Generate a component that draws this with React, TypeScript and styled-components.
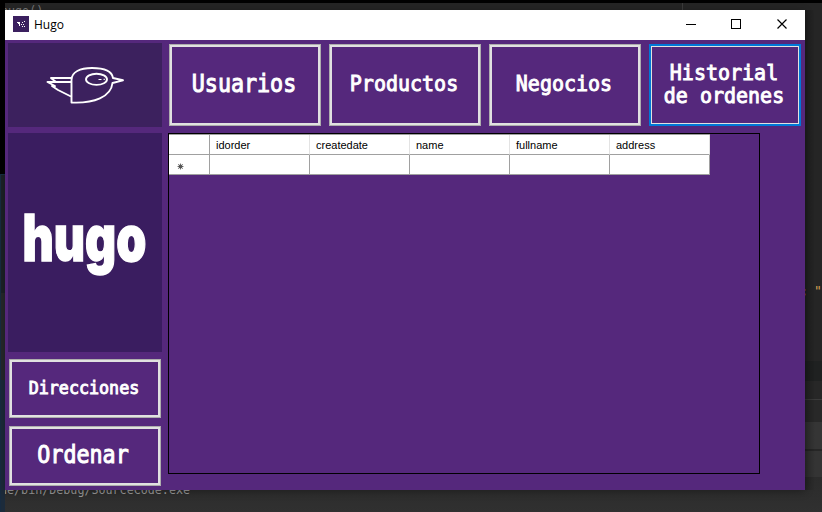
import React from "react";
import styled, { createGlobalStyle } from "styled-components";

const GlobalStyle = createGlobalStyle`
  * { box-sizing: border-box; }
  body { margin: 0; overflow: hidden; background: #262626; }
`;

const Desktop = styled.div`
  position: relative;
  width: 822px;
  height: 512px;
  overflow: hidden;
  padding: 10px 17px 22px 5px;
  background: linear-gradient(#000 0 3px, #252525 3px 340px, #262626 440px, #303030 512px);
`;

const LeftEdge = styled.div`
  position: absolute;
  left: 0;
  top: 0;
  width: 5px;
  height: 512px;
  background:
    linear-gradient(90deg, #182b40 1px, transparent 1px) 0 174px no-repeat,
    linear-gradient(#000 0 174px, #173044 174px 175px, #1c2228 175px 293px, #26292c 293px 380px, #1c2b3b 380px);
`;

const RightEdge = styled.div`
  position: absolute;
  left: 805px;
  top: 3px;
  width: 17px;
  height: 509px;
  background: linear-gradient(
    #252525 0 358px, #1f2121 358px 378px, #272727 378px 396px, #3b3b3b 396px 397px,
    #282828 397px 419px, #353535 419px 446px, #262626 446px 448px, #343434 448px 474px, #2b2b2b 474px, #303030 509px
  );
`;

const EdgeShade = styled.div`
  position: absolute;
  left: 805px;
  top: 10px;
  width: 10px;
  height: 480px;
  background: linear-gradient(90deg, rgba(0, 0, 0, 0.22), transparent);
`;

const Divider = styled.div`
  position: absolute;
  left: 682px;
  top: 3px;
  width: 1px;
  height: 7px;
  background: #3b3b3b;
`;

const CodeText = styled.span<{ $x: number; $y: number; $color: string; $size?: number }>`
  position: absolute;
  left: ${(p) => p.$x}px;
  top: ${(p) => p.$y}px;
  color: ${(p) => p.$color};
  font: ${(p) => p.$size ?? 11.7}px/14px "DejaVu Sans Mono", monospace;
  white-space: pre;
`;

const Window = styled.div`
  position: relative;
  width: 800px;
  height: 480px;
  display: flex;
  flex-direction: column;
  background: #55287c;
  box-shadow: 0 2px 8px rgba(0, 0, 0, 0.3);
`;

const TitleBar = styled.header`
  height: 30px;
  flex: none;
  display: flex;
  align-items: center;
  padding-left: 8px;
  background: #fff;
`;

const IconBox = styled.svg`
  width: 16px;
  height: 16px;
  margin-top: -2px;
`;

const Title = styled.span`
  flex: 1;
  margin: 0 0 0 5px;
  color: #000;
  font: 12px/16px "Open Sans", sans-serif;
`;

const Controls = styled.svg`
  width: 138px;
  height: 30px;
`;

const Body = styled.main`
  flex: 1;
  display: flex;
  padding: 3px 4px 4px 3px;
`;

const Sidebar = styled.aside`
  width: 154px;
  display: flex;
  flex-direction: column;
`;

const BirdPanel = styled.div`
  height: 84px;
  margin-bottom: 6px;
  background: #3c215e;
`;

const LogoPanel = styled.div`
  height: 219px;
  margin-bottom: 7px;
  background: #3a1d60;
`;

const Content = styled.section`
  flex: 1;
  padding: 1px 0 0 6px;
`;

const Nav = styled.nav`
  display: flex;
  gap: 8px;
  padding-left: 1px;
`;

const Button = styled.button<{ $h: number; $focused?: boolean; $gap?: number }>`
  width: 152px;
  height: ${(p) => p.$h}px;
  flex: none;
  display: flex;
  align-items: center;
  justify-content: center;
  margin: 0 0 ${(p) => p.$gap ?? 0}px;
  padding: 0;
  color: #fff;
  background: #55287c;
  border: ${(p) => (p.$focused ? "2px solid #0078d7" : "1px solid #adadad")};
  box-shadow: inset 0 0 0 ${(p) => (p.$focused ? 1 : 2)}px #e1e1e1;
`;

const SideButtons = styled.div`
  display: flex;
  flex-direction: column;
  padding-left: 1px;
`;

const Label = styled.span<{ $size: number; $stretch: number; $x?: number; $y?: number }>`
  font: ${(p) => p.$size}px/21.5px "DejaVu Sans Mono", monospace;
  -webkit-text-stroke: 0.9px #fff;
  white-space: pre;
  text-align: center;
  transform: translate(${(p) => p.$x ?? 0}px, ${(p) => p.$y ?? 0}px) scaleY(${(p) => p.$stretch});
`;

const GridFrame = styled.div`
  width: 592px;
  height: 341px;
  margin-top: 7px;
  border: 1px solid #000;
`;

const Table = styled.div`
  width: 541px;
  height: 41px;
  display: grid;
  grid-template-columns: 41px repeat(5, 100px);
  grid-template-rows: 20px 20px;
  background: #fff;
  border-top: 1px solid #a0a0a0;
`;

const HeaderCell = styled.div<{ $corner?: boolean }>`
  padding: 0 0 0 6px;
  color: #000;
  font: 11px/20px "Liberation Sans", Arial, sans-serif;
  border-bottom: 1px solid #a0a0a0;
  border-right: 1px solid ${(p) => (p.$corner ? "#a0a0a0" : "#e3e3e3")};
`;

const Cell = styled.div`
  display: flex;
  align-items: center;
  padding: 3px 0 0 8px;
  border-right: 1px solid #a0a0a0;
  border-bottom: 1px solid #a0a0a0;
`;

const columns = ["idorder", "createdate", "name", "fullname", "address"];

const AppIcon = () => (
  <IconBox viewBox="0 0 16 16" shapeRendering="crispEdges">
    <rect width="16" height="16" fill="#3b205f" />
    <path d="M4 6h3v4H6V8H5V7H4zM9 6h1v1H9zM11 5h1v1h-1zM8 8h1v1H8zM10 8h1v1h-1zM9 10h1v1H9zM11 10h1v1h-1z" fill="#fff" />
  </IconBox>
);

const Bird = () => (
  <svg width="154" height="84" viewBox="8 43 154 84" fill="none" stroke="#fff" strokeWidth="1.9" strokeLinejoin="round">
    <path d="M71.500 102.500V80C71.500 72 80 68 92 68C104 68 112 71.500 113 78L123 80.300L112.500 83C111 97 94 103.500 71.500 102.500Z" />
    <path d="M71 78H51L56 82H47.500L55 86H52L58 90L71 96.500M56 82H71" />
    <ellipse cx="96.500" cy="79.300" rx="10.500" ry="5.600" />
    <path d="M98.500 79.500h3M103.500 79.300h1.500" strokeWidth="1" />
  </svg>
);

const HugoLogo = () => (
  <svg width="154" height="219" viewBox="8 133 154 219">
    <text
      transform="translate(22.500 261) scale(0.76 1)"
      fill="#fff"
      stroke="#fff"
      strokeWidth="1.400"
      fontFamily="Inter"
      fontWeight="900"
      fontSize="64"
      textLength="163"
      lengthAdjust="spacingAndGlyphs"
    >
      hugo
    </text>
  </svg>
);

export default function App() {
  return (
    <Desktop>
      <GlobalStyle />
      <CodeText $x={1} $y={4} $color="#777">hugo()</CodeText>
      <Divider />
      <CodeText $x={0} $y={483} $color="#9b9b9b">de/bin/Debug/SourceCode.exe</CodeText>
      <LeftEdge />
      <RightEdge />
      <EdgeShade />
      <CodeText $x={801} $y={284} $color="#965a3a">;</CodeText>
      <CodeText $x={814} $y={284} $color="#d2a154" $size={13}>"</CodeText>
      <Window>
        <TitleBar>
          <AppIcon />
          <Title>Hugo</Title>
          <Controls viewBox="0 0 138 30" fill="none" stroke="#000">
            <path d="M19 14.500h10" shapeRendering="crispEdges" />
            <rect x="64.500" y="9.500" width="9" height="9" shapeRendering="crispEdges" />
            <path d="M110.500 9.500l9 9m0-9l-9 9" strokeWidth="1.200" />
          </Controls>
        </TitleBar>
        <Body>
          <Sidebar>
            <BirdPanel><Bird /></BirdPanel>
            <LogoPanel><HugoLogo /></LogoPanel>
            <SideButtons>
              <Button $h={59} $gap={8}><Label $size={16.7} $stretch={1.1} $x={-1} $y={-1}>Direcciones</Label></Button>
              <Button $h={60}><Label $size={21.7} $stretch={1.15} $x={-2} $y={-1}>Ordenar</Label></Button>
            </SideButtons>
          </Sidebar>
          <Content>
            <Nav>
              <Button $h={82}><Label $size={21.7} $stretch={1.15} $x={-1} $y={-1}>Usuarios</Label></Button>
              <Button $h={82}><Label $size={20} $stretch={1.07} $x={-1}>Productos</Label></Button>
              <Button $h={82}><Label $size={20} $stretch={1.07} $x={-1}>Negocios</Label></Button>
              <Button $h={82} $focused><Label $size={20} $stretch={1.07} $x={-1} $y={-1}>{"Historial\nde ordenes"}</Label></Button>
            </Nav>
            <GridFrame>
              <Table>
                <HeaderCell $corner />
                {columns.map((name) => <HeaderCell key={name}>{name}</HeaderCell>)}
                <Cell>
                  <svg width="7" height="7" viewBox="0 0 7 7" stroke="#555">
                    <circle cx="3.500" cy="3.500" r="1.600" fill="#444" />
                    <path d="M3.500 .5v6M.5 3.500h6M1.200 1.200l4.600 4.600M5.800 1.200L1.200 5.800" strokeWidth="0.800" />
                  </svg>
                </Cell>
                {columns.map((name) => <Cell key={name} />)}
              </Table>
            </GridFrame>
          </Content>
        </Body>
      </Window>
    </Desktop>
  );
}
